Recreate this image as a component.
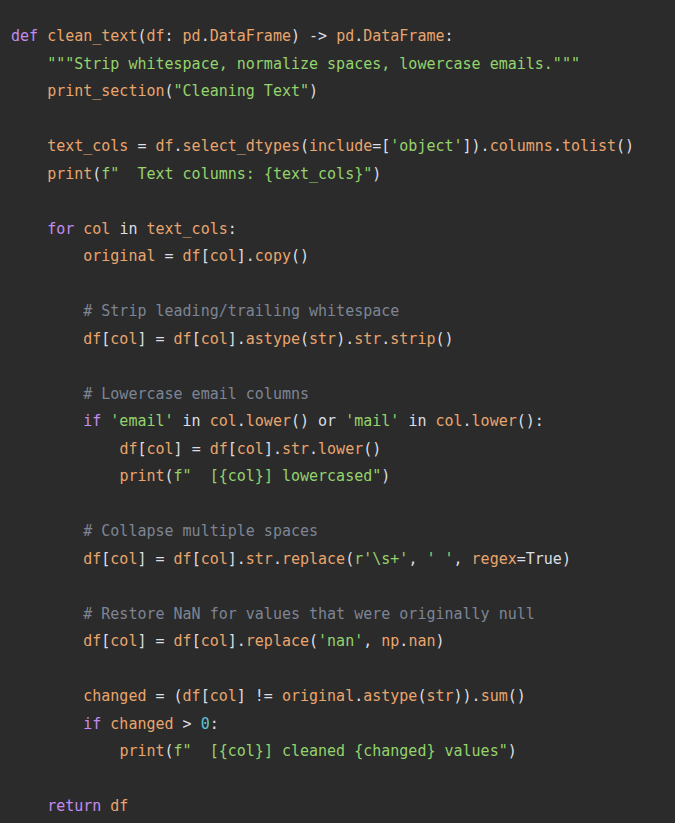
import React from 'react';

// token helpers
const K = ({ children }) => <span className="text-[#c48cf0]">{children}</span>;
const I = ({ children }) => <span className="text-[#e9a56d]">{children}</span>;
const S = ({ children }) => <span className="text-[#94d36d]">{children}</span>;
const P = ({ children }) => <span className="text-[#dcdfe4]">{children}</span>;
const C = ({ children }) => <span className="text-[#7d8594]">{children}</span>;
const N = ({ children }) => <span className="text-[#5ec4cc]">{children}</span>;

const dfcol = (
  <>
    <I>df</I><P>[</P><I>col</I><P>]</P>
  </>
);

const lines = [
  [0, <><K>def</K> <I>clean_text</I><P>(</P><I>df</I><P>:</P> <I>pd</I><P>.</P><I>DataFrame</I><P>)</P> <P>-&gt;</P> <I>pd</I><P>.</P><I>DataFrame</I><P>:</P></>],
  [1, <S>"""Strip whitespace, normalize spaces, lowercase emails."""</S>],
  [1, <><I>print_section</I><P>(</P><S>"Cleaning Text"</S><P>)</P></>],
  [0, null],
  [1, <><I>text_cols</I> <P>=</P> <I>df</I><P>.</P><I>select_dtypes</I><P>(</P><I>include</I><P>=[</P><S>'object'</S><P>]).</P><I>columns</I><P>.</P><I>tolist</I><P>()</P></>],
  [1, <><I>print</I><P>(</P><S>f"  Text columns: {'{text_cols}'}"</S><P>)</P></>],
  [0, null],
  [1, <><K>for</K> <I>col</I> <P>in</P> <I>text_cols</I><P>:</P></>],
  [2, <><I>original</I> <P>=</P> {dfcol}<P>.</P><I>copy</I><P>()</P></>],
  [0, null],
  [2, <C># Strip leading/trailing whitespace</C>],
  [2, <>{dfcol} <P>=</P> {dfcol}<P>.</P><I>astype</I><P>(</P><I>str</I><P>).</P><I>str</I><P>.</P><I>strip</I><P>()</P></>],
  [0, null],
  [2, <C># Lowercase email columns</C>],
  [2, <><K>if</K> <S>'email'</S> <P>in</P> <I>col</I><P>.</P><I>lower</I><P>()</P> <P>or</P> <S>'mail'</S> <P>in</P> <I>col</I><P>.</P><I>lower</I><P>():</P></>],
  [3, <>{dfcol} <P>=</P> {dfcol}<P>.</P><I>str</I><P>.</P><I>lower</I><P>()</P></>],
  [3, <><I>print</I><P>(</P><S>f"  [{'{col}'}] lowercased"</S><P>)</P></>],
  [0, null],
  [2, <C># Collapse multiple spaces</C>],
  [2, <>{dfcol} <P>=</P> {dfcol}<P>.</P><I>str</I><P>.</P><I>replace</I><P>(</P><S>r'\s+'</S><P>,</P> <S>' '</S><P>,</P> <I>regex</I><P>=True)</P></>],
  [0, null],
  [2, <C># Restore NaN for values that were originally null</C>],
  [2, <>{dfcol} <P>=</P> {dfcol}<P>.</P><I>replace</I><P>(</P><S>'nan'</S><P>,</P> <I>np</I><P>.</P><I>nan</I><P>)</P></>],
  [0, null],
  [2, <><I>changed</I> <P>=</P> <P>(</P>{dfcol} <P>!=</P> <I>original</I><P>.</P><I>astype</I><P>(</P><I>str</I><P>)).</P><I>sum</I><P>()</P></>],
  [2, <><K>if</K> <I>changed</I> <P>&gt;</P> <N>0</N><P>:</P></>],
  [3, <><I>print</I><P>(</P><S>f"  [{'{col}'}] cleaned {'{changed}'} values"</S><P>)</P></>],
  [0, null],
  [1, <><K>return</K> <I>df</I></>],
];

const indents = ['', '    ', '        ', '            '];

export default function App() {
  return (
    <div className="w-[675px] h-[823px] bg-[#2b2b2b] overflow-hidden">
      <pre
        className="pt-[23px] pl-[11px] text-[15px] leading-[27.5px] text-[#dcdfe4] whitespace-pre"
        style={{ fontFamily: '"DejaVu Sans Mono", "Liberation Mono", monospace' }}
      >
        {lines.map(([lvl, content], i) => (
          <div key={i} className="h-[27.5px]">
            {content ? <>{indents[lvl]}{content}</> : ' '}
          </div>
        ))}
      </pre>
    </div>
  );
}
